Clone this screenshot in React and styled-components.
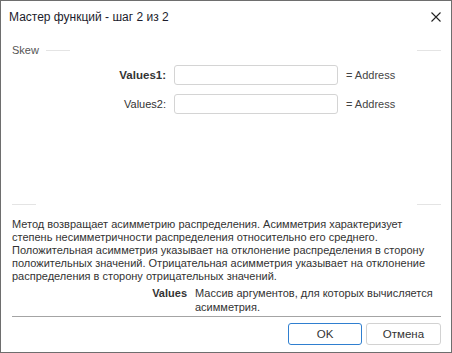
import React from 'react';
import styled, { createGlobalStyle } from 'styled-components';

const GlobalStyle = createGlobalStyle`
  html, body {
    margin: 0;
    padding: 0;
    background: #ffffff;
  }
  * {
    box-sizing: border-box;
  }
`

const Window = styled.div`
  width: 452px;
  height: 353px;
  border: 1px solid #6e6e6e;
  background: #ffffff;
  display: flex;
  flex-direction: column;
  font-family: "Liberation Sans", Arial, sans-serif;
  font-size: 11px;
  color: #333333;
`

const TitleBar = styled.div`
  height: 31px;
  display: flex;
  align-items: center;
  justify-content: space-between;
  padding: 0 10px 0 8px;
  .title {
    font-size: 12px;
    color: #1c1c2c;
  }
`

const CloseButton = styled.button`
  border: none;
  background: none;
  padding: 0;
  width: 10px;
  height: 10px;
  cursor: pointer;
  svg {
    display: block;
  }
`

const Body = styled.div`
  flex: 1;
  display: flex;
  flex-direction: column;
  padding: 0 10px 0 11px;
`

const GroupEdge = styled.div`
  display: flex;
  align-items: center;
  height: 18px;
  margin-top: ${({ top }) => top || 0}px;
  .caption {
    color: #555555;
    margin-right: 7px;
  }
  .spacer {
    flex: 1;
  }
`

const EdgeLine = styled.div`
  width: 24px;
  height: 1px;
  background: #e4e4e4;
`

const Fields = styled.div`
  display: grid;
  grid-template-columns: 154px 164px auto;
  column-gap: 8px;
  row-gap: 9px;
  align-items: center;
  margin-top: 6px;
  flex: 1;
  align-content: start;
`

const FieldLabel = styled.label`
  text-align: right;
  font-weight: ${({ required }) => (required ? 700 : 400)};
  font-size: ${({ required }) => (required ? 11.5 : 11)}px;
  color: #333333;
`

const FieldInput = styled.input`
  height: 20px;
  width: 164px;
  border: 1px solid #d4d4d4;
  border-radius: 3px;
  background: #ffffff;
  outline: none;
  padding: 0 4px;
  font: inherit;
`

const FieldHint = styled.span`
  color: #444444;
`

const Description = styled.div`
  margin-top: 5px;
  line-height: 13px;
  color: #333333;
  span {
    display: block;
    white-space: nowrap;
  }
`

const ParamRow = styled.div`
  display: grid;
  grid-template-columns: 175px auto;
  column-gap: 8px;
  margin-top: 3px;
  line-height: 14px;
  .name {
    text-align: right;
    font-weight: 700;
  }
  span {
    display: block;
    white-space: nowrap;
  }
`

const Separator = styled.div`
  height: 1px;
  background: #a4a4a4;
  margin-top: 2px;
`

const Footer = styled.div`
  display: flex;
  justify-content: flex-end;
  gap: 4px;
  padding: 6px 0 7px;
`

const DialogButton = styled.button`
  width: ${({ wide }) => (wide ? 75 : 74)}px;
  height: 22px;
  border: 1px solid ${({ primary }) => (primary ? '#2f7fd0' : '#d2d2d2')};
  border-radius: 3px;
  background: #ffffff;
  font-family: inherit;
  font-size: 11.5px;
  color: #333333;
  padding: 0;
  cursor: pointer;
`

const App = () => {
  return (
    <>
      <GlobalStyle />
      <Window>
        <TitleBar>
          <span className="title">Мастер функций - шаг 2 из 2</span>
          <CloseButton aria-label="Закрыть">
            <svg width="10" height="10" viewBox="0 0 10 10">
              <path d="M0.5 0.5 L9.5 9.5 M9.5 0.5 L0.5 9.5" stroke="#222" strokeWidth="1.1" fill="none" />
            </svg>
          </CloseButton>
        </TitleBar>
        <Body>
          <GroupEdge top={9}>
            <span className="caption">Skew</span>
            <EdgeLine />
            <div className="spacer" />
            <EdgeLine />
          </GroupEdge>
          <Fields>
            <FieldLabel required>Values1:</FieldLabel>
            <FieldInput />
            <FieldHint>= Address</FieldHint>
            <FieldLabel>Values2:</FieldLabel>
            <FieldInput />
            <FieldHint>= Address</FieldHint>
          </Fields>
          <GroupEdge>
            <EdgeLine />
            <div className="spacer" />
            <EdgeLine />
          </GroupEdge>
          <Description>
            <span>Метод возвращает асимметрию распределения. Асимметрия характеризует</span>
            <span>степень несимметричности распределения относительно его среднего.</span>
            <span>Положительная асимметрия указывает на отклонение распределения в сторону</span>
            <span>положительных значений. Отрицательная асимметрия указывает на отклонение</span>
            <span>распределения в сторону отрицательных значений.</span>
          </Description>
          <ParamRow>
            <span className="name">Values</span>
            <div>
              <span>Массив аргументов, для которых вычисляется</span>
              <span>асимметрия.</span>
            </div>
          </ParamRow>
          <Separator />
          <Footer>
            <DialogButton primary>OK</DialogButton>
            <DialogButton wide>Отмена</DialogButton>
          </Footer>
        </Body>
      </Window>
    </>
  );
};

export default App;
